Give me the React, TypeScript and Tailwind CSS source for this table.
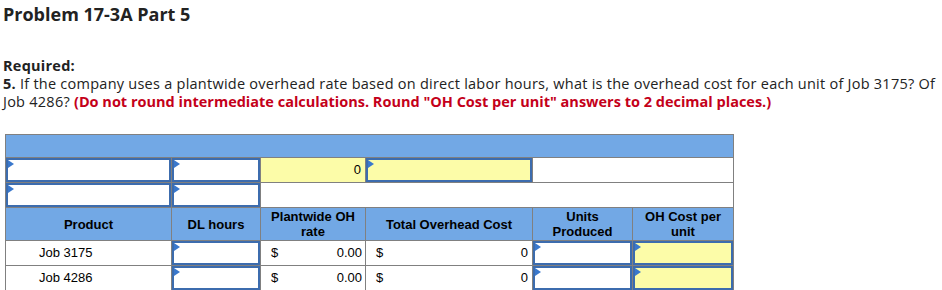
import React from "react";

const BLUE = "bg-[#72a8e5]";
const YELLOW = "bg-[#fcfca8]";

function Flag() {
  return (
    <svg className="absolute left-0 top-0" width="6" height="8" viewBox="0 0 6 8">
      <polygon points="0,0 6,4 0,8" fill="#3a78cc" />
    </svg>
  );
}

function InputCell({ yellow = false, flag = true }: { yellow?: boolean; flag?: boolean }) {
  return (
    <td className="border border-[#808080] p-0 h-[25px]">
      <div
        className={`relative h-[24px] border-2 border-[#3c6cae] ${yellow ? YELLOW : "bg-white"}`}
      >
        {flag && <Flag />}
      </div>
    </td>
  );
}

const cell = "border border-[#808080] h-[25px] p-0";
const head = "border border-[#808080] text-center font-bold text-[13px] leading-[15px] text-black px-1";

export default function App() {
  return (
    <div className="bg-white w-[942px] h-[290px] overflow-hidden text-[#222] font-['Open_Sans',sans-serif]">
      <div className="pl-[3px] pt-[2px]">
        <h1 className="text-[18px] font-bold leading-[24px] text-[#222]">
          Problem 17-3A Part 5
        </h1>
        <div className="mt-[31px] text-[14.5px] leading-[18px] w-[938px] tracking-[0.25px]">
          <p className="font-bold">Required:</p>
          <p>
            <span className="font-bold">5.</span> If the company uses a plantwide overhead rate based on direct
            labor hours, what is the overhead cost for each unit of Job 3175? Of Job 4286?{" "}
            <span className="font-bold text-[#c4001a] tracking-[0px]">
              (Do not round intermediate calculations. Round "OH Cost per unit" answers to 2 decimal places.)
            </span>
          </p>
        </div>
      </div>

      <table className="ml-[5px] mt-[23px] border-collapse table-fixed w-[728px] font-['Liberation_Sans',Arial,sans-serif] text-[13px] text-black">
        <colgroup>
          <col className="w-[166px]" />
          <col className="w-[89px]" />
          <col className="w-[105px]" />
          <col className="w-[167px]" />
          <col className="w-[100px]" />
          <col className="w-[101px]" />
        </colgroup>
        <tbody>
          <tr>
            <td colSpan={6} className={`border border-[#808080] h-[23px] ${BLUE}`} />
          </tr>
          <tr>
            <InputCell />
            <InputCell />
            <td className={`${cell} ${YELLOW} text-right pr-[4px]`}>0</td>
            <InputCell yellow />
            <td colSpan={2} className={`${cell} bg-white`} />
          </tr>
          <tr>
            <InputCell />
            <InputCell />
            <td colSpan={4} className={`${cell} bg-white`} />
          </tr>
          <tr className={BLUE}>
            <td className={`${head} h-[33px]`}>Product</td>
            <td className={head}>DL hours</td>
            <td className={head}>
              Plantwide OH
              <br />
              rate
            </td>
            <td className={head}>Total Overhead Cost</td>
            <td className={head}>
              Units
              <br />
              Produced
            </td>
            <td className={head}>
              OH Cost per
              <br />
              unit
            </td>
          </tr>
          {["Job 3175", "Job 4286"].map((job) => (
            <tr key={job}>
              <td className={`${cell} pl-[33px] bg-white`}>{job}</td>
              <InputCell />
              <td className={`${cell} bg-white`}>
                <div className="flex justify-between pl-[10px] pr-[3px]">
                  <span>$</span>
                  <span>0.00</span>
                </div>
              </td>
              <td className={`${cell} bg-white`}>
                <div className="flex justify-between pl-[10px] pr-[4px]">
                  <span>$</span>
                  <span>0</span>
                </div>
              </td>
              <InputCell />
              <InputCell yellow />
            </tr>
          ))}
        </tbody>
      </table>
    </div>
  );
}
